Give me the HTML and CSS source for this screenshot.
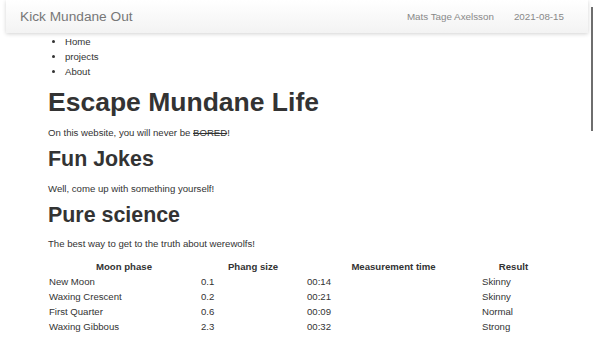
FILE: index.html
```html
<html lang="en">
<head>
    <meta charset="UTF-8">
    <meta name="viewport" content="width=device-width, initial-scale=1.0">
    <title>Kick Mundane Out</title>
    <link rel="stylesheet" href="styles.css">
</head>
<body>
<div class="navbar">
  <div class="brand">Kick Mundane Out</div>
  <div class="meta">
    <span>Mats Tage Axelsson</span>
    <span>2021-08-15</span>
  </div>
</div>
<div class="scroll-thumb"></div>

<div class="content">
  <ul class="menu">
    <li>Home</li>
    <li>projects</li>
    <li>About</li>
  </ul>

  <h1>Escape Mundane Life</h1>
  <p>On this website, you will never be <del>BORED</del>!</p>

  <h2>Fun Jokes</h2>
  <p>Well, come up with something yourself!</p>

  <h2>Pure science</h2>
  <p>The best way to get to the truth about werewolfs!</p>

  <table class="results">
    <colgroup>
      <col class="c1"><col class="c2"><col class="c3"><col class="c4">
    </colgroup>
    <thead>
      <tr><th>Moon phase</th><th>Phang size</th><th>Measurement time</th><th>Result</th></tr>
    </thead>
    <tbody>
      <tr><td>New Moon</td><td>0.1</td><td>00:14</td><td>Skinny</td></tr>
      <tr><td>Waxing Crescent</td><td>0.2</td><td>00:21</td><td>Skinny</td></tr>
      <tr><td>First Quarter</td><td>0.6</td><td>00:09</td><td>Normal</td></tr>
      <tr><td>Waxing Gibbous</td><td>2.3</td><td>00:32</td><td>Strong</td></tr>
    </tbody>
  </table>
</div>
</body>
</html>
```

FILE: styles.css
```css
body {
    margin: 0;
    font-family: "Liberation Sans", Arial, sans-serif;
    font-size: 9.6px;
    line-height: 15px;
    color: #333;
    background-color: #fff;
}

/* Top bar */
.navbar {
    display: flex;
    align-items: center;
    justify-content: space-between;
    height: 33px;
    margin: 0 12px 0 6px;
    padding: 0 24px 0 14px;
    background: linear-gradient(#ffffff, #f3f3f3);
    box-shadow: 0 1px 4px rgba(0, 0, 0, 0.18);
}

.brand {
    font-size: 13.7px;
    color: #777;
}

.meta {
    display: flex;
    gap: 20px;
    font-size: 9.8px;
    color: #888;
}

.scroll-thumb {
    position: absolute;
    left: 591px;
    top: 7px;
    width: 2px;
    height: 124px;
    background-color: #6e6e6e;
}

.content {
    padding-left: 48px;
    width: 500px;
}

.menu {
    margin: 1px 0 0 0;
    padding-left: 17px;
}

h1 {
    font-size: 26.5px;
    line-height: 1.1;
    margin: 9px 0 8px;
}

h2 {
    font-size: 21.4px;
    line-height: 1.1;
    margin: 8px 0 9px;
}

p {
    margin: 0;
}

/* Werewolf table */
.results {
    margin-top: 8px;
    border-collapse: collapse;
    table-layout: fixed;
    width: 498px;
    font-size: inherit;
    color: inherit;
}

.results .c1 { width: 152px; }
.results .c2 { width: 106px; }
.results .c3 { width: 175px; }
.results .c4 { width: 65px; }

.results th,
.results td {
    padding: 0 1px;
    line-height: 15px;
}

.results th {
    text-align: center;
}

.results td {
    text-align: left;
}
```
